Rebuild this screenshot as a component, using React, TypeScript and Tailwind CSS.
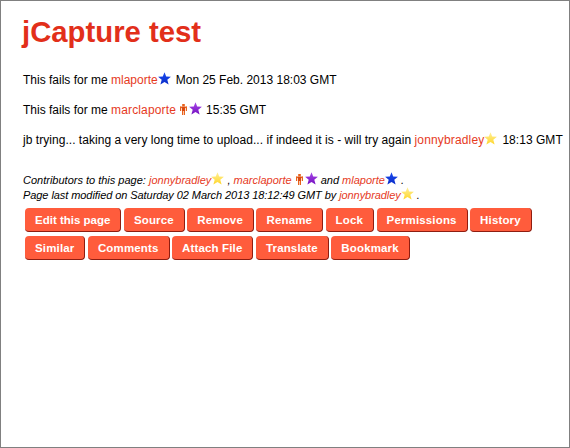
import type { ReactNode } from 'react';

const font = { fontFamily: '"Liberation Sans", Arial, sans-serif' };

const row1 = ['Edit this page', 'Source', 'Remove', 'Rename', 'Lock', 'Permissions', 'History'];
const row2 = ['Similar', 'Comments', 'Attach File', 'Translate', 'Bookmark'];

function Star({ color, light }: { color: string; light: string }) {
  const id = `s${color.slice(1)}`;
  return (
    <svg width="13" height="13" viewBox="0 0 13 13" className="inline-block align-[-1px]">
      <defs>
        <linearGradient id={id} x1="0" y1="0" x2="0" y2="1">
          <stop offset="0" stopColor={light} />
          <stop offset="1" stopColor={color} />
        </linearGradient>
      </defs>
      <path d="M6.5 0.2 8.2 4.6 12.9 4.8 9.3 7.8 10.6 12.6 6.5 9.9 2.4 12.6 3.7 7.8 0.1 4.8 4.8 4.6Z" fill={`url(#${id})`} />
    </svg>
  );
}

const BlueStar = () => <Star color="#0a2cc8" light="#1a4cf0" />;
const PurpleStar = () => <Star color="#7410c0" light="#a848e8" />;
const YellowStar = () => <Star color="#ffd62a" light="#fff09a" />;

function Person() {
  return (
    <svg width="7" height="11" viewBox="0 0 7 11" className="inline-block align-[-1px] ml-[4px] mr-[2px]">
      <rect x="2.2" y="0" width="2.6" height="2" fill="#e8621c" />
      <rect x="0" y="2.6" width="7" height="1.5" fill="#e8621c" />
      <rect x="0" y="2.6" width="1.2" height="4.4" fill="#e8621c" />
      <rect x="5.8" y="2.6" width="1.2" height="4.4" fill="#e8621c" />
      <rect x="2" y="2.6" width="3" height="4.4" fill="#d9480f" />
      <rect x="2" y="7" width="1.2" height="4" fill="#e8621c" />
      <rect x="3.8" y="7" width="1.2" height="4" fill="#e8621c" />
    </svg>
  );
}

function UserLink({ children, wide }: { children: ReactNode; wide?: boolean }) {
  return <a className={wide ? 'text-[#e63a1e] tracking-[0.15px]' : 'text-[#e63a1e]'}>{children}</a>;
}

function Btn({ label, tight }: { label: string; tight?: boolean }) {
  return (
    <a
      className={`h-6 pl-[10px] pr-[10px] pt-[2px] flex items-center rounded-[4px] bg-[#ff5c3c] border-b-[1.5px] border-r border-[#8f1d10] text-white text-[11.5px] font-bold whitespace-nowrap ${
        tight ? 'tracking-[0px]' : 'tracking-[0.15px]'
      }`}
    >
      {label}
    </a>
  );
}

export default function App() {
  return (
    <div style={font} className="w-[570px] h-[448px] bg-white border border-[#808080] text-black text-[12px] overflow-hidden">
      <div className="pl-[22px] pt-[13px]">
        <h1 className="-ml-px text-[29.3px] leading-[36px] font-bold text-[#e22f1a]">jCapture test</h1>
        <p className="mt-[22px] h-[30px] leading-[16px] whitespace-nowrap">
          This fails for me <UserLink>mlaporte</UserLink>
          <BlueStar />
          <span className="ml-[5px]">Mon 25 Feb. 2013 18:03 GMT</span>
        </p>
        <p className="h-[30px] leading-[16px] whitespace-nowrap">
          This fails for me <UserLink wide>marclaporte</UserLink>
          <Person />
          <PurpleStar />
          <span className="ml-[4px]">15:35 GMT</span>
        </p>
        <p className="h-[30px] leading-[16px] whitespace-nowrap tracking-[0.04px]">
          jb trying... taking a very long time to upload... if indeed it is - will try again <UserLink wide>jonnybradley</UserLink>
          <YellowStar />
          <span className="ml-[5px]">18:13 GMT</span>
        </p>
        <div className="mt-[10px] text-[11px] italic whitespace-nowrap">
          <div className="h-[15px] leading-[15px]">
            Contributors to this page: <UserLink>jonnybradley</UserLink>
            <YellowStar /> , <UserLink>marclaporte</UserLink>
            <Person />
            <PurpleStar /> and <UserLink>mlaporte</UserLink>
            <BlueStar /> .
          </div>
          <div className="h-[15px] leading-[15px] tracking-[-0.07px]">
            Page last modified on Saturday 02 March 2013 18:12:49 GMT by <UserLink>jonnybradley</UserLink>
            <YellowStar /> .
          </div>
        </div>
        <div className="mt-[6px] ml-[2px] flex flex-col gap-1">
          <div className="flex gap-[2.5px]">
            {row1.map((b, i) => (
              <Btn key={b} label={b} tight={i === 0} />
            ))}
          </div>
          <div className="flex gap-[2.5px]">
            {row2.map((b) => (
              <Btn key={b} label={b} />
            ))}
          </div>
        </div>
      </div>
    </div>
  );
}
